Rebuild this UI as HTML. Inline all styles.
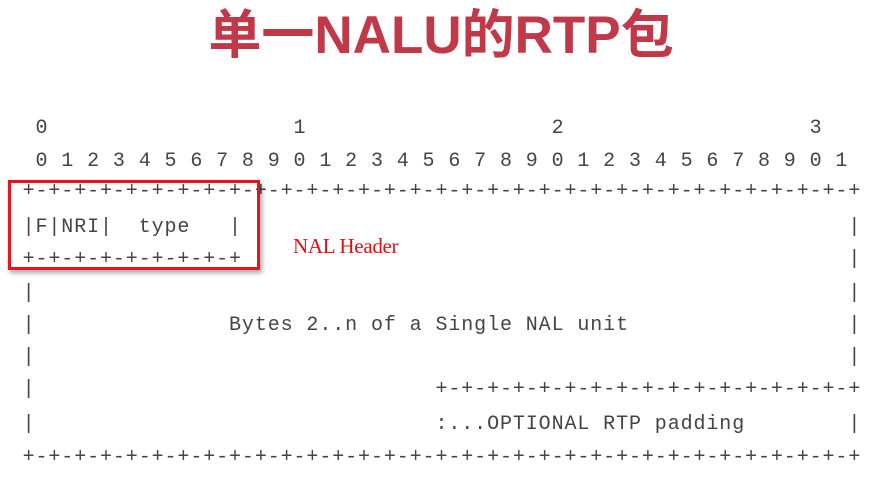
<!DOCTYPE html>
<html><head><meta charset="utf-8"><style>
html,body{margin:0;padding:0;width:882px;height:478px;background:#fff;overflow:hidden}
.t{position:absolute;left:0;width:882px;top:-7px;text-align:center;font:bold 53px "Liberation Sans","Noto Sans CJK SC",sans-serif;color:#c13849;letter-spacing:0px}
.l{position:absolute;left:22.6px;margin:0;font:20px/24px "Liberation Mono",monospace;letter-spacing:0.9px;color:#444;white-space:pre}
.box{position:absolute;left:8px;top:180px;width:246px;height:84px;border:3px solid #e8141c;box-shadow:2px 3px 5px rgba(0,0,0,.35)}
.nh{position:absolute;left:293px;top:234px;font:21px "Liberation Serif",serif;color:#e01010;letter-spacing:-0.3px}
</style></head><body>
<div class="t">单一NALU的RTP包</div>
<pre class="l" style="top:117px"> 0                   1                   2                   3</pre>
<pre class="l" style="top:150px"> 0 1 2 3 4 5 6 7 8 9 0 1 2 3 4 5 6 7 8 9 0 1 2 3 4 5 6 7 8 9 0 1</pre>
<pre class="l" style="top:180px">+-+-+-+-+-+-+-+-+-+-+-+-+-+-+-+-+-+-+-+-+-+-+-+-+-+-+-+-+-+-+-+-+</pre>
<pre class="l" style="top:216px">|F|NRI|  type   |                                               |</pre>
<pre class="l" style="top:248px">+-+-+-+-+-+-+-+-+                                               |</pre>
<pre class="l" style="top:282px">|                                                               |</pre>
<pre class="l" style="top:314px">|               Bytes 2..n of a Single NAL unit                 |</pre>
<pre class="l" style="top:346px">|                                                               |</pre>
<pre class="l" style="top:378px">|                               +-+-+-+-+-+-+-+-+-+-+-+-+-+-+-+-+</pre>
<pre class="l" style="top:413px">|                               :...OPTIONAL RTP padding        |</pre>
<pre class="l" style="top:446px">+-+-+-+-+-+-+-+-+-+-+-+-+-+-+-+-+-+-+-+-+-+-+-+-+-+-+-+-+-+-+-+-+</pre>
<div class="box"></div>
<div class="nh">NAL Header</div>
</body></html>
